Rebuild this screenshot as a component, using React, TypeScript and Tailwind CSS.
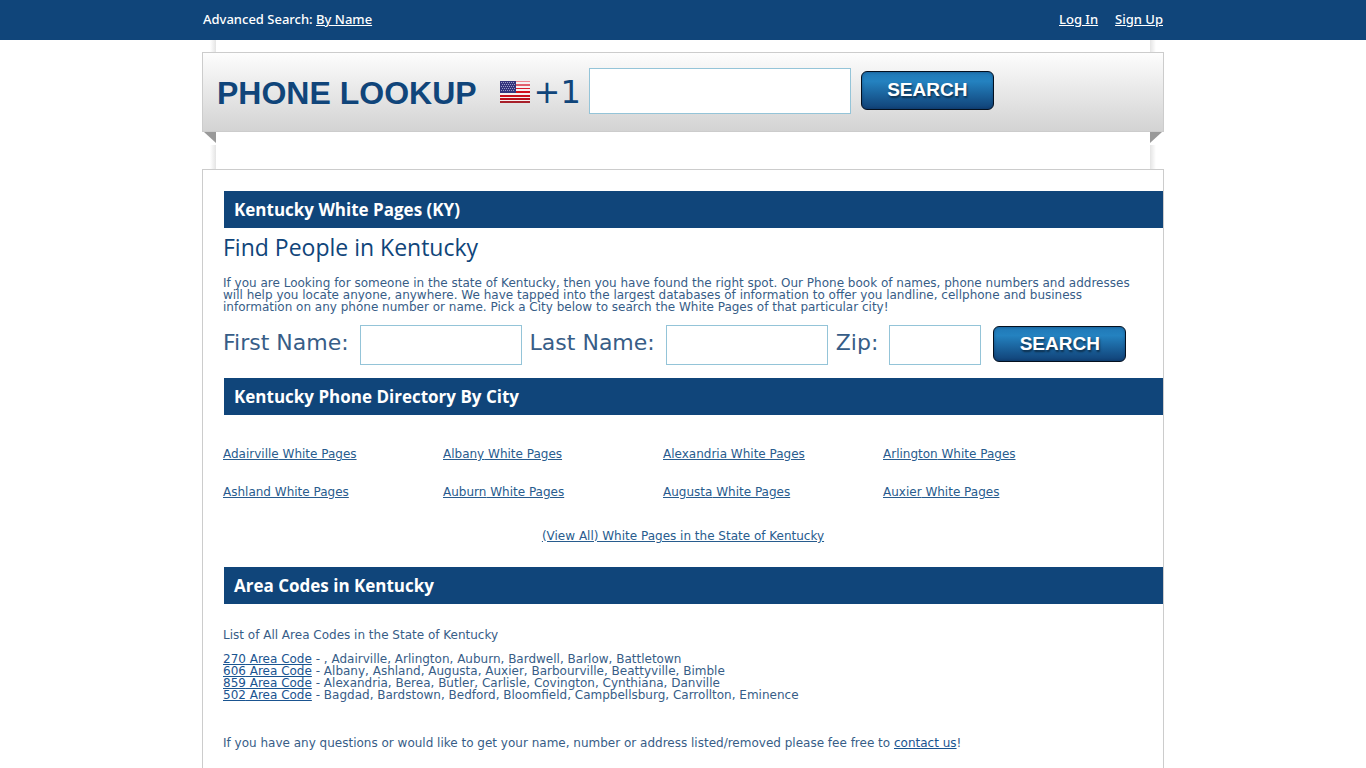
import type { ReactNode } from "react";

const cities = [
  "Adairville",
  "Albany",
  "Alexandria",
  "Arlington",
  "Ashland",
  "Auburn",
  "Augusta",
  "Auxier",
];

const areaCodes = [
  { code: "270", places: ", Adairville, Arlington, Auburn, Bardwell, Barlow, Battletown" },
  { code: "606", places: "Albany, Ashland, Augusta, Auxier, Barbourville, Beattyville, Bimble" },
  { code: "859", places: "Alexandria, Berea, Butler, Carlisle, Covington, Cynthiana, Danville" },
  { code: "502", places: "Bagdad, Bardstown, Bedford, Bloomfield, Campbellsburg, Carrollton, Eminence" },
];

const stripes = [
  { y: 0, height: 1, fill: "#ee8a92" },
  { y: 3, height: 2, fill: "#e0606c" },
  { y: 7, height: 1, fill: "#d81e2c" },
  { y: 10, height: 2, fill: "#d00f1c" },
  { y: 14, height: 2, fill: "#c8101c" },
  { y: 17, height: 2, fill: "#b80f1a" },
  { y: 20, height: 2, fill: "#a8202a" },
];

function Flag() {
  return (
    <svg viewBox="0 0 30 22" className="h-[22px] w-[30px]" role="img" aria-label="United States">
      <rect width="30" height="22" fill="#f6f1f1" />
      {stripes.map((stripe) => (
        <rect key={stripe.y} y={stripe.y} width="30" height={stripe.height} fill={stripe.fill} />
      ))}
      <rect width="16" height="12" fill="#34357c" />
      {[1, 3, 5, 7, 9].map((y, row) =>
        [1, 3, 5, 7, 9, 11, 13].map((x) => (
          <rect key={`${x}-${y}`} x={x + (row % 2)} y={y} width="1" height="1" fill="#9c9cc8" />
        ))
      )}
    </svg>
  );
}

function SearchButton({ className }: { className: string }) {
  return (
    <button
      type="submit"
      className={`w-[133px] rounded-md border border-[#04101f] bg-linear-to-b from-[#2078b6] via-[#2482c0] via-25% to-[#114277] font-['Liberation_Sans',Arial,sans-serif] text-[19px] leading-6 font-bold text-white shadow-[inset_0_0_3px_rgba(5,30,70,0.4)] text-shadow-[1px_2px_2px_rgba(0,0,0,0.5)] ${className}`}
    >
      SEARCH
    </button>
  );
}

/* Page edge shadow on both sides */
function EdgeShadow({ className }: { className: string }) {
  return (
    <div className={`flex justify-between px-2 ${className}`}>
      <div className="w-1.5 bg-linear-to-r from-white to-[#e4e4e4]"></div>
      <div className="w-1.5 bg-linear-to-l from-white to-[#e4e4e4]"></div>
    </div>
  );
}

function Bar({ children }: { children: ReactNode }) {
  return (
    <h2 className="ml-[21px] h-[37px] bg-[#10457a] px-2.5 font-['Open_Sans','Noto_Sans',sans-serif] text-[17px] leading-[37px] font-bold text-white">
      {children}
    </h2>
  );
}

function Field({ id, label, className }: { id: string; label: string; className: string }) {
  return (
    <div className="flex items-center gap-[11px]">
      <label htmlFor={id} className="pb-1 text-[22px] leading-6">{label}</label>
      <input id={id} type="text" className={`h-10 border border-[#94c4d8] bg-white px-2 text-lg outline-none ${className}`} />
    </div>
  );
}

export default function App() {
  return (
    <div className="bg-white font-['DejaVu_Sans',Verdana,sans-serif] text-xs leading-3 text-[#375d87]">
      {/* Top bar */}
      <div className="bg-[#10457a] text-white">
        <div className="mx-auto flex h-10 max-w-[960px] items-center justify-between pb-0.5 font-['Noto_Sans',sans-serif] text-[13px] font-medium">
          <p>
            Advanced Search: <a href="#" className="underline">By Name</a>
          </p>
          <nav className="flex gap-[17px]">
            <a href="#" className="underline">Log In</a>
            <a href="#" className="underline">Sign Up</a>
          </nav>
        </div>
      </div>

      <div className="mx-auto max-w-[962px]">
        <EdgeShadow className="h-3" />

        {/* Phone lookup */}
        <form className="flex h-20 items-center border border-[#cccccc] bg-linear-to-b from-[#fdfdfd] to-[#d3d3d3] pl-[14px] text-[#10457a]">
          <h1 className="pt-0.5 font-['Liberation_Sans',Arial,sans-serif] text-[32px] leading-10 font-bold">PHONE LOOKUP</h1>
          <div className="ml-[23px] flex items-center gap-1">
            <Flag />
            <label htmlFor="phone" className="text-[32px] leading-10">+1</label>
          </div>
          <input id="phone" type="tel" className="mb-0.5 ml-2 h-[46px] w-[262px] border border-[#94c4d8] bg-white px-2 text-2xl outline-none" />
          <SearchButton className="mb-1 ml-2.5 h-[39px]" />
        </form>
        <div className="flex justify-between px-0.5">
          <svg viewBox="0 0 12 11" className="h-[11px] w-3"><path d="M0 0h12v11z" fill="#999" /></svg>
          <svg viewBox="0 0 12 11" className="h-[11px] w-3"><path d="M0 0h12L0 11z" fill="#999" /></svg>
        </div>
        <EdgeShadow className="mt-0.5 h-6" />

        <main className="border border-[#cccccc] pt-[21px] pb-12">
          <Bar>Kentucky White Pages (KY)</Bar>
          <section className="pl-5">
            <h3 className="pt-1 font-['Open_Sans','Noto_Sans',sans-serif] text-[23px] leading-[30px] text-[#10457a]">Find People in Kentucky</h3>
            <p className="mt-[15px] pr-5">
              If you are Looking for someone in the state of Kentucky, then you have found the right spot. Our Phone book of names, phone numbers and addresses will help you locate anyone, anywhere. We have tapped into the largest databases of information to offer you landline, cellphone and business information on any phone number or name. Pick a City below to search the White Pages of that particular city!
            </p>
            <form className="mt-3 mb-[13px] flex items-center gap-2">
              <Field id="first" label="First Name:" className="w-[162px]" />
              <Field id="last" label="Last Name:" className="w-[162px]" />
              <Field id="zip" label="Zip:" className="w-[92px]" />
              <SearchButton className="mb-0.5 ml-1 h-9" />
            </form>
          </section>

          <Bar>Kentucky Phone Directory By City</Bar>
          <ul className="mt-[33px] ml-5 grid grid-cols-[repeat(4,220px)] gap-y-[26px]">
            {cities.map((city) => (
              <li key={city}>
                <a href="#" className="text-[#285c8e] underline">{city} White Pages</a>
              </li>
            ))}
          </ul>
          <p className="mt-8 mb-[25px] text-center">
            <a href="#" className="text-[#285c8e] underline">(View All) White Pages in the State of Kentucky</a>
          </p>

          <Bar>Area Codes in Kentucky</Bar>
          <section className="mt-[25px] pl-5">
            <p>List of All Area Codes in the State of Kentucky</p>
            <ul className="mt-3">
              {areaCodes.map((area) => (
                <li key={area.code}>
                  <a href="#" className="text-[#1a5490] underline">{area.code} Area Code</a> - {area.places}
                </li>
              ))}
            </ul>
            <p className="mt-9">
              If you have any questions or would like to get your name, number or address listed/removed please fee free to{" "}
              <a href="#" className="text-[#1a5490] underline">contact us</a>!
            </p>
          </section>
        </main>
      </div>
    </div>
  );
}
